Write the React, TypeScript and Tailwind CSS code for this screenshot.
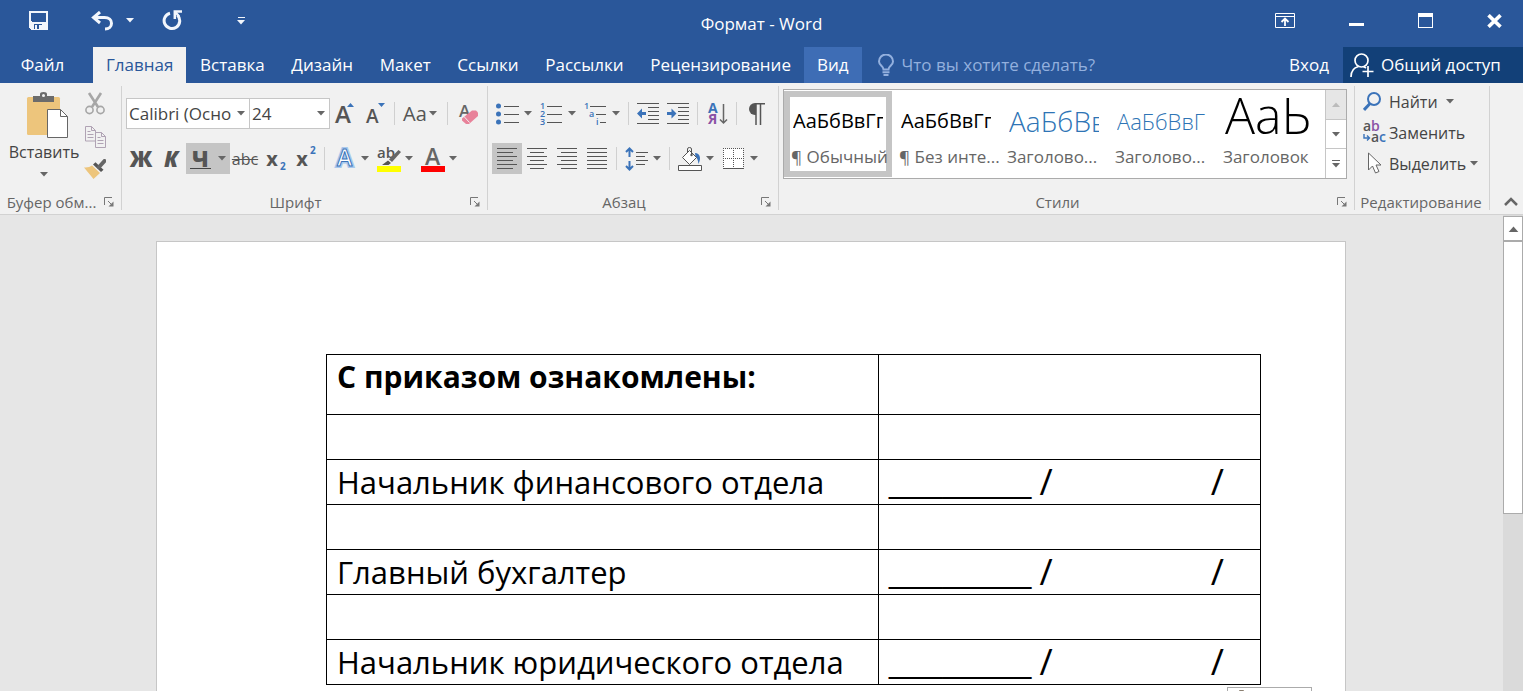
import type { ReactNode } from "react";

const tabs = [
  "Главная",
  "Вставка",
  "Дизайн",
  "Макет",
  "Ссылки",
  "Рассылки",
  "Рецензирование",
];

const styleItems = [
  { name: "¶ Обычный", sample: "АаБбВвГг,", look: "text-xl text-black", selected: true },
  { name: "¶ Без инте...", sample: "АаБбВвГг,", look: "text-xl text-black" },
  { name: "Заголово...", sample: "АаБбВв", look: "text-[28px] font-light text-[#2e74b5]" },
  { name: "Заголово...", sample: "АаБбВвГ", look: "text-[22px] font-light text-[#2e74b5]" },
  { name: "Заголовок", sample: "АаЬ", look: "pb-3 text-[50px] font-light text-black" },
];

const rows = [
  { title: "С приказом ознакомлены:", bold: true },
  {},
  { title: "Начальник финансового отдела", sign: true },
  {},
  { title: "Главный бухгалтер", sign: true },
  {},
  { title: "Начальник юридического отдела", sign: true },
];

const Arrow = ({ className = "text-[#666]" }: { className?: string }) => (
  <svg width="8" height="5" viewBox="0 0 8 5" className={`shrink-0 ${className}`}>
    <path d="M0 0h8L4 4.5z" fill="currentColor" />
  </svg>
);

const Separator = () => (
  <div className="flex w-[9px] shrink-0 justify-center">
    <div className="my-1 w-px bg-[#d0d0d0]" />
  </div>
);

type ToolProps = {
  label: string;
  children: ReactNode;
  menu?: boolean;
  active?: boolean;
};

function Tool({ label, children, menu, active }: ToolProps) {
  return (
    <button
      aria-label={label}
      className={`flex h-[31px] shrink-0 items-center hover:bg-[#d5d5d5] ${
        menu ? "w-11 justify-between pr-1 pl-1" : "w-[30px] justify-center"
      } ${active ? "bg-[#c5c5c5]" : ""}`}
    >
      {children}
      {menu && <Arrow />}
    </button>
  );
}

type LinesProps = { lines: [number, number][] };

// Horizontal strokes of an alignment icon, one [start, end] pair each
const Lines = ({ lines }: LinesProps) => (
  <svg width="22" height="22" viewBox="0 0 22 22" stroke="#555" shapeRendering="crispEdges">
    {lines.map(([a, b], i) => (
      <path key={i} d={`M${a} ${i * 4 + 0.5}H${b}`} />
    ))}
  </svg>
);

type GroupProps = {
  title: string;
  children: ReactNode;
  className: string;
  launcher?: boolean;
};

function Group({ title, children, className, launcher = true }: GroupProps) {
  return (
    <section className={`mt-[3px] mb-1 flex flex-col border-r border-[#d2d2d2] ${className}`}>
      <div className="flex-1">{children}</div>
      <div className="flex h-4 items-center pr-1 pl-0.5 text-[#666]">
        <p className="flex-1 text-center text-[15px] leading-4 whitespace-nowrap">{title}</p>
        {launcher && (
          <button aria-label={`Параметры: ${title}`} className="flex size-4 shrink-0 items-center justify-center">
            <svg width="10" height="10" viewBox="0 0 10 10" fill="none" stroke="#777">
              <path d="M.5 8V.5H8M4 4l4 4" />
              <path d="M9.500 4.500v5h-5z" fill="#777" stroke="none" />
            </svg>
          </button>
        )}
      </div>
    </section>
  );
}

function TitleBar() {
  return (
    <header className="grid h-[47px] grid-cols-[1fr_auto_1fr] items-center">
      <div className="flex items-center pb-1.5 pl-[29px]">
        <button aria-label="Сохранить">
          <svg width="19" height="19" viewBox="0 0 19 19" shapeRendering="crispEdges">
            <path d="M0 0h19v19H2l-2-2z" fill="#f2f6fc" />
            <path d="M2 2h15v8l-1 1H3l-1-1zM5 13h8v5H5z" fill="#2a579a" />
            <path d="M6 14h2v4H6zM10 14h3v4h-3z" fill="#f2f6fc" />
          </svg>
        </button>
        <button aria-label="Отменить" className="ml-[43px]">
          <svg width="23" height="20" viewBox="0 0 23 20" fill="none" stroke="#f2f6fc" strokeWidth="3">
            <path d="M9 1 2.500 6.500 9 12" />
            <path d="M2.500 6.500h11c4.500 0 7 2.500 7 5.700 0 3.300-2.500 5.800-6.500 5.800" />
          </svg>
        </button>
        <button aria-label="Варианты отмены" className="ml-3">
          <Arrow className="text-[#f2f6fc]" />
        </button>
        <button aria-label="Повторить" className="ml-7">
          <svg width="21" height="21" viewBox="0 0 21 21" fill="none" stroke="#f2f6fc" strokeWidth="3">
            <path d="M8 3.200A7.800 7.800 0 1 0 15.500 5.300" />
            <path d="M20 1.400h-7.200V9" strokeWidth="2.500" />
            <path d="M13 1.500l4 5" strokeWidth="2.500" />
          </svg>
        </button>
        <button aria-label="Настройка панели" className="ml-[54px] flex flex-col items-center gap-0.5">
          <span className="h-px w-[7px] bg-[#f2f6fc]" />
          <Arrow className="text-[#f2f6fc]" />
        </button>
      </div>
      <h1 className="text-[17px]">Формат - Word</h1>
      <div className="flex items-center justify-end gap-[54px] pr-[21px] pb-1.5">
        <button aria-label="Параметры отображения ленты">
          <svg width="20" height="15" viewBox="0 0 20 15" fill="none" stroke="#fff">
            <path d="M.5.500h19v14H.5zM.5 3.500h19" />
            <path d="M10 13V6M6.500 9 10 5.500 13.500 9" strokeWidth="1.800" />
          </svg>
        </button>
        <button aria-label="Свернуть" className="h-[11px] w-[15px] border-b-3 border-white" />
        <button aria-label="Развернуть" className="h-[15px] w-[15px] border border-t-4 border-white" />
        <button aria-label="Закрыть">
          <svg width="15" height="14" viewBox="0 0 15 14" stroke="#fff" strokeWidth="3.600">
            <path d="M1.500 1.200l12 11.600M13.500 1.200l-12 11.600" />
          </svg>
        </button>
      </div>
    </header>
  );
}

function TabBar() {
  return (
    <nav className="flex h-9 items-stretch">
      <button className="mr-2 w-[85px]">Файл</button>
      <div className="flex w-[711px] justify-between">
        {tabs.map((tab, i) => (
          <button
            key={tab}
            className={`px-[13px] ${i === 0 ? "bg-[#f1f1f1] text-[#2a579a]" : "hover:bg-[#3e6db5]"}`}
          >
            {tab}
          </button>
        ))}
      </div>
      <button className="bg-[#3e6db5] px-[13px]">Вид</button>
      <label className="ml-4 flex flex-1 items-center gap-2 text-[#93b0de]">
        <svg width="16" height="22" viewBox="0 0 16 22" fill="none" stroke="currentColor" strokeWidth="2">
          <path d="M5.500 15.500C5.500 12 1 11.500 1 7.500a7 7 0 0 1 14 0c0 4-4.500 4.500-4.500 8z" />
          <path d="M4.500 18.200h7M5.500 21h5" />
        </svg>
        <input
          aria-label="Помощник"
          placeholder="Что вы хотите сделать?"
          className="w-56 bg-transparent outline-none placeholder:text-[#93b0de]"
        />
      </label>
      <button className="px-3.5">Вход</button>
      <button className="flex w-[180px] items-center gap-[7px] bg-[#124078] pl-[7px]">
        <svg width="24" height="25" viewBox="0 0 24 25" fill="none" stroke="#fff" strokeWidth="1.700">
          <circle cx="11.500" cy="7.500" r="6.500" />
          <path d="M1 24c0-6 3-9.500 7.500-10.500M13.500 13.800c1 .2 1.800.7 2.500 1.200M18 13v11M12.500 18.500h11" />
        </svg>
        Общий доступ
      </button>
    </nav>
  );
}

function Clipboard() {
  return (
    <Group title="Буфер обм..." className="w-[122px]">
      <div className="flex gap-1 pt-1.5 pl-2">
        <button className="flex w-[72px] flex-col items-center text-base text-[#444]">
          <svg width="50" height="46" viewBox="-8 0 50 46">
            <rect x="0" y="5" width="33" height="38" rx="1.500" fill="#edc57c" />
            <path d="M6 4h7V2q0-2 3.500-2T20 2v2h7v6H6z" fill="#6b6b6b" />
            <circle cx="16.500" cy="3.500" r="1.500" fill="#f1f1f1" />
            <path d="M20.500 17.500h13l7 7v21h-20z" fill="#fff" stroke="#666" />
            <path d="M33.500 17.500v7h7" fill="none" stroke="#666" />
          </svg>
          <span className="mt-0.5">Вставить</span>
          <span className="flex h-5 items-center">
            <Arrow />
          </span>
        </button>
        <div className="flex flex-col items-center gap-[11px]">
          <button aria-label="Вырезать">
            <svg width="20" height="23" viewBox="0 0 20 23" fill="none" stroke="#a6a6a6">
              <path d="M4 1l9 14M16 1L7 15" strokeWidth="2.600" />
              <circle cx="4.500" cy="18" r="3.600" strokeWidth="1.600" />
              <circle cx="15.500" cy="18" r="3.600" strokeWidth="1.600" />
            </svg>
          </button>
          <button aria-label="Копировать">
            <svg width="21" height="22" viewBox="0 0 21 22" fill="#f1f1f1" stroke="#b0a3b4">
              <path d="M.5.500h6l4 4v10.500H.5zM6.500.5v4h4M2.500 5.500h3M2.500 8.500h6M2.500 11.500h6" />
              <path d="M10.500 6.500h6l4 4v11h-10zM16.500 6.500v4h4M12.500 11.500h3M12.500 14.500h6M12.500 17.500h6" />
            </svg>
          </button>
          <button aria-label="Формат по образцу">
            <svg width="22" height="20" viewBox="0 0 22 20">
              <path d="M0 8.500q5 .5 8-2l8 7.500L9.500 20z" fill="#edc57c" />
              <path d="M9 5.500l2.500-2.300 8 7.500-2.500 2.300z" fill="#555" />
              <path d="M15 8l5.500-6" stroke="#666" strokeWidth="4" strokeLinecap="round" />
            </svg>
          </button>
        </div>
      </div>
    </Group>
  );
}

type PickerProps = { label: string; value: string; className: string };

function Picker({ label, value, className }: PickerProps) {
  return (
    <div className={`relative h-[31px] border border-[#c6c6c6] bg-white ${className}`}>
      <select aria-label={label} className="size-full appearance-none pl-0.5 text-[17px] text-[#444] outline-none">
        <option>{value}</option>
      </select>
      <Arrow className="pointer-events-none absolute top-3 right-1 text-[#666]" />
    </div>
  );
}

function FontGroup() {
  return (
    <Group title="Шрифт" className="w-[366px]">
      <div className="flex flex-col gap-3.5 pt-3 pl-1 text-[#555]">
        <div className="flex">
          <Picker label="Шрифт" value="Calibri (Осно" className="w-[124px]" />
          <Picker label="Размер" value="24" className="-ml-px w-[81px]" />
          <Tool label="Увеличить размер">
            <svg width="22" height="24" viewBox="0 0 22 24" className="overflow-visible">
              <text x="1" y="21" fontSize="24" fontWeight="600" fill="#555">A</text>
              <path d="M13 5l3.500-4L20 5z" fill="#3b73b9" />
            </svg>
          </Tool>
          <Tool label="Уменьшить размер">
            <svg width="22" height="24" viewBox="0 0 22 24" className="overflow-visible">
              <text x="2" y="21" fontSize="19" fontWeight="600" fill="#555">A</text>
              <path d="M14 1l3.500 4L21 1z" fill="#3b73b9" />
            </svg>
          </Tool>
          <Separator />
          <button aria-label="Регистр" className="flex w-11 items-center gap-0.5 pl-1 text-xl">
            Aa
            <Arrow />
          </button>
          <Separator />
          <Tool label="Очистить форматирование">
            <svg width="22" height="24" viewBox="0 0 22 24" className="overflow-visible">
              <text x="3" y="15" fontSize="17" fontWeight="600" fill="#666">A</text>
              <path d="M16 8.500h4l2 2v3.500L13 22h-3l-4-3.500v-2z" fill="#e8829a" />
              <path d="M8 14.500l5.500 6" stroke="#f1f1f1" />
            </svg>
          </Tool>
        </div>
        <div className="flex">
          <Tool label="Полужирный">
            <span className="text-[22px] font-extrabold">Ж</span>
          </Tool>
          <Tool label="Курсив">
            <span className="text-[22px] font-extrabold italic">К</span>
          </Tool>
          <Tool label="Подчеркнутый" menu active>
            <span className="border-b border-[#444] px-0.5 text-[22px] leading-5 font-extrabold">Ч</span>
          </Tool>
          <Tool label="Зачеркнутый">
            <span className="text-base line-through">abc</span>
          </Tool>
          <Tool label="Подстрочный знак">
            <span className="ml-0.5 text-xl font-bold">x</span>
            <span className="mt-4 ml-0.5 text-[10px] font-bold text-[#3b73b9]">2</span>
          </Tool>
          <Tool label="Надстрочный знак">
            <span className="ml-0.5 text-xl font-bold">x</span>
            <span className="mb-4 ml-0.5 text-[10px] font-bold text-[#3b73b9]">2</span>
          </Tool>
          <Separator />
          <Tool label="Текстовые эффекты" menu>
            <svg width="24" height="26" viewBox="0 0 24 26" className="overflow-visible">
              <text x="4" y="20" fontSize="23" fontWeight="600" fill="none" stroke="#a9c8ec" strokeWidth="4">A</text>
              <text x="4" y="20" fontSize="23" fontWeight="600" fill="#fff" stroke="#3b73b9">A</text>
            </svg>
          </Tool>
          <Tool label="Цвет выделения текста" menu>
            <svg width="24" height="28" viewBox="0 0 24 28" className="overflow-visible">
              <text x="0" y="13" fontSize="15" fontWeight="600" fill="#555">ab</text>
              <path d="M21.500 5L24 7l-9 10-3-2.500z" fill="#666" />
              <path d="M11 15.500l3 2.500-2.500 2H5z" fill="#555" />
              <path d="M0 21h24v6H0z" fill="#ff0" />
            </svg>
          </Tool>
          <Tool label="Цвет текста" menu>
            <svg width="24" height="28" viewBox="0 0 24 28" className="overflow-visible">
              <text x="4" y="20" fontSize="23" fontWeight="600" fill="#666">A</text>
              <path d="M0 21h24v6H0z" fill="#f00" />
            </svg>
          </Tool>
        </div>
      </div>
    </Group>
  );
}

function ParagraphGroup() {
  return (
    <Group title="Абзац" className="w-[291px]">
      <div className="flex flex-col gap-3.5 pt-3 pl-1">
        <div className="flex">
          <Tool label="Маркеры" menu>
            <svg width="23" height="22" viewBox="0 0 23 22" stroke="#555">
              <path d="M8 3.500h15M8 11.500h15M8 19.500h15" />
              <g fill="#3b73b9" stroke="none">
                <circle cx="2.500" cy="3" r="2.500" />
                <circle cx="2.500" cy="11" r="2.500" />
                <circle cx="2.500" cy="19" r="2.500" />
              </g>
            </svg>
          </Tool>
          <Tool label="Нумерация" menu>
            <svg width="23" height="24" viewBox="0 0 23 24" stroke="#555" className="overflow-visible">
              <path d="M7 4.500h15M7 12.500h15M7 20.500h15" />
              <g fill="#3b73b9" stroke="none" fontSize="9" fontWeight="600">
                <text x="0" y="7">1</text>
                <text x="0" y="15">2</text>
                <text x="0" y="23">3</text>
              </g>
            </svg>
          </Tool>
          <Tool label="Многоуровневый список" menu>
            <svg width="23" height="24" viewBox="0 0 23 24" stroke="#555" className="overflow-visible">
              <path d="M6 4.500h16M12 12.500h10M16 20.500h6" />
              <g fill="#3b73b9" stroke="none" fontSize="9" fontWeight="600">
                <text x="0" y="7">1</text>
                <text x="5" y="15">a</text>
                <text x="12" y="23">i</text>
              </g>
            </svg>
          </Tool>
          <Separator />
          <Tool label="Уменьшить отступ">
            <svg width="22" height="21" viewBox="0 0 22 21" stroke="#555">
              <path d="M0 .5h22M11 4.500h11M11 8.500h11M11 12.500h11M11 16.500h11M0 20.500h22" />
              <path d="M0 10.500l5-5v3.500h4v3H5v3.500z" fill="#3b73b9" stroke="none" />
            </svg>
          </Tool>
          <Tool label="Увеличить отступ">
            <svg width="22" height="21" viewBox="0 0 22 21" stroke="#555">
              <path d="M0 .5h22M11 4.500h11M11 8.500h11M11 12.500h11M11 16.500h11M0 20.500h22" />
              <path d="M9.500 10.500l-5-5v3.500H0v3h4.500v3.500z" fill="#3b73b9" stroke="none" />
            </svg>
          </Tool>
          <Separator />
          <Tool label="Сортировка">
            <svg width="20" height="24" viewBox="0 0 20 24" fontWeight="700" fontSize="14" className="overflow-visible">
              <text x="1" y="11" fill="#3b73b9">А</text>
              <text x="1" y="22" fill="#8a52a5">Я</text>
              <path d="M16.500 2v19M13 17.500l3.500 3.500 3.500-3.500" fill="none" stroke="#666" strokeWidth="1.500" />
            </svg>
          </Tool>
          <Separator />
          <Tool label="Отобразить все знаки">
            <svg width="17" height="22" viewBox="0 0 17 22" stroke="#555" strokeWidth="1.500">
              <path d="M7 .8h10M8 1v21M12.500 1v21" />
              <path d="M8 0v12H7A6 6 0 0 1 7 0z" fill="#555" stroke="none" />
            </svg>
          </Tool>
        </div>
        <div className="flex">
          <Tool label="По левому краю" active>
            <Lines lines={[[1, 21], [1, 17], [1, 21], [1, 17], [1, 21], [1, 17]]} />
          </Tool>
          <Tool label="По центру">
            <Lines lines={[[1, 21], [4, 18], [1, 21], [4, 18], [1, 21], [4, 18]]} />
          </Tool>
          <Tool label="По правому краю">
            <Lines lines={[[1, 21], [5, 21], [1, 21], [5, 21], [1, 21], [5, 21]]} />
          </Tool>
          <Tool label="По ширине">
            <Lines lines={[[1, 21], [1, 21], [1, 21], [1, 21], [1, 21], [1, 21]]} />
          </Tool>
          <Separator />
          <Tool label="Интервал" menu>
            <svg width="23" height="24" viewBox="0 0 23 24" fill="none" stroke="#555">
              <path d="M11 5.500h12M11 9.500h9M11 13.500h12M11 17.500h9" />
              <path d="M4.500 3v7M4.500 14v7M1 5l3.500-3.500L8 5M1 19l3.500 3.500L8 19" stroke="#3b73b9" strokeWidth="2" />
            </svg>
          </Tool>
          <Separator />
          <Tool label="Заливка" menu>
            <svg width="24" height="24" viewBox="0 0 24 24" stroke="#555">
              <path d="M17 6c5 .5 6.500 5 3.500 11-.5-4-1.500-6-3-7.500z" fill="#3b73b9" stroke="none" />
              <path d="M11.500 3.500l7 7-7 7-7-7z" fill="#fff" />
              <path d="M9.500 5.500V2q0-1.500 2-1.500t2 1.500v6" fill="none" />
              <circle cx="13.500" cy="8" r="1.200" fill="#555" stroke="none" />
              <path d="M.5 18.500h23v5H.5z" fill="#fff" />
            </svg>
          </Tool>
          <Tool label="Границы" menu>
            <svg width="23" height="22" viewBox="0 0 23 22" fill="#fff" stroke="#555">
              <path d="M1 .5h20v20H1z" stroke="none" />
              <path d="M1 .5h21M1 10.500h21M1.500 0v21M11.500 0v21M21.500 0v21" strokeDasharray="1 1" shapeRendering="crispEdges" />
              <path d="M1 20.500h21" />
            </svg>
          </Tool>
        </div>
      </div>
    </Group>
  );
}

function StylesGroup() {
  return (
    <Group title="Стили" className="min-w-0 flex-1">
      <div className="mt-[3px] mr-[7px] ml-1 flex h-[90px] border border-[#ababab] bg-white">
        <div className="flex min-w-0 flex-1">
          {styleItems.map((item, i) => (
            <button
              key={i}
              className={`my-px flex w-[108px] shrink-0 flex-col border-6 px-[3px] text-left whitespace-nowrap ${
                item.selected ? "border-[#c5c5c5]" : "border-transparent"
              }`}
            >
              <span className={`flex h-12 w-full items-center overflow-hidden ${item.look}`}>
                {item.sample}
              </span>
              <span className="-ml-0.5 text-[17px] leading-6 text-[#666]">{item.name}</span>
            </button>
          ))}
        </div>
        <div className="flex w-[21px] flex-col divide-y divide-[#c6c6c6] border-l border-[#c6c6c6]">
          <button aria-label="Вверх" className="flex flex-1 items-center justify-center bg-[#e6e6e6]">
            <Arrow className="rotate-180 text-[#bbb]" />
          </button>
          <button aria-label="Вниз" className="flex flex-1 items-center justify-center">
            <Arrow />
          </button>
          <button aria-label="Все стили" className="flex flex-1 flex-col items-center justify-center gap-0.5">
            <span className="h-px w-2 bg-[#666]" />
            <Arrow />
          </button>
        </div>
      </div>
    </Group>
  );
}

function EditingGroup() {
  return (
    <Group title="Редактирование" className="w-[135px]" launcher={false}>
      <div className="flex flex-col pl-2 text-base text-[#444]">
        <button className="flex h-[31px] items-center gap-2">
          <svg width="18" height="20" viewBox="0 0 18 20" fill="none" stroke="#3b73b9">
            <circle cx="11" cy="7" r="6" strokeWidth="2" />
            <path d="M7 11.500L1 18" strokeWidth="3" />
          </svg>
          Найти
          <Arrow />
        </button>
        <button className="flex h-[31px] items-center gap-1">
          <svg width="22" height="24" viewBox="0 0 22 24" fontSize="14" fontWeight="600" className="overflow-visible">
            <text x="0" y="10" fill="#555">a</text>
            <text x="8" y="10" fill="#8a52a5">b</text>
            <text x="8" y="21" fill="#555">a</text>
            <text x="16" y="21" fill="#3b73b9">c</text>
            <path d="M1 13v4h5M4 14.500L6.500 17 4 19.500" fill="none" stroke="#3b73b9" strokeWidth="1.400" />
          </svg>
          Заменить
        </button>
        <button className="flex h-[31px] items-center gap-1">
          <svg width="22" height="23" viewBox="0 0 22 23" fill="#fff" stroke="#666">
            <path d="M5.500 1v17l4-4 3 7 3.500-1.500-3-6.500h5z" />
          </svg>
          Выделить
          <Arrow />
        </button>
      </div>
    </Group>
  );
}

function Sheet() {
  return (
    <main className="relative mt-[26px] mr-[157px] ml-auto w-[1190px] border border-[#c6c6c6] bg-white pt-28 pb-20 pl-[169px] text-black">
      <table className="w-[935px] table-fixed border-collapse text-[31px] leading-11">
        <tbody>
          {rows.map((row, i) => (
            <tr key={i} className={i === 0 ? "h-15" : "h-[45px]"}>
              <td
                className={`w-[552px] border border-black px-2.5 py-0 align-top ${
                  row.bold ? "text-[30px] font-bold" : ""
                }`}
              >
                {row.title}
              </td>
              <td className="border border-black px-2.5 py-0 align-top">
                {row.sign && (
                  <div className="flex">
                    <span className="font-['Liberation_Sans',sans-serif] text-[32px] leading-11">________</span>
                    <span className="ml-2 text-4xl leading-11">/</span>
                    <span className="ml-auto pr-[26px] text-4xl leading-11">/</span>
                  </div>
                )}
              </td>
            </tr>
          ))}
        </tbody>
      </table>
      {/* paste options popup at the table corner */}
      <div className="absolute right-[33px] bottom-12 h-[30px] w-[85px] border border-[#ababab] bg-white pt-0.5 pl-2.5">
        <svg width="12" height="14" viewBox="0 0 12 14" fill="#eee" stroke="#8a7f70">
          <path d="M1.500 3.500V.5h4v3M.5 3.500h8v9h-8z" />
        </svg>
      </div>
    </main>
  );
}

export default function App() {
  return (
    <div className="flex h-screen flex-col overflow-hidden bg-[#e6e6e6] font-['Open_Sans','Noto_Sans',sans-serif] text-[17px]">
      <div className="bg-[#2a579a] text-white">
        <TitleBar />
        <TabBar />
      </div>
      <div className="flex h-[132px] shrink-0 border-b border-[#d2d2d2] bg-[#f1f1f1]">
        <Clipboard />
        <FontGroup />
        <ParagraphGroup />
        <StylesGroup />
        <EditingGroup />
        <button aria-label="Свернуть ленту" className="flex w-[33px] items-end justify-center pb-2 pl-2">
          <svg width="14" height="9" viewBox="0 0 14 9" fill="none" stroke="#666" strokeWidth="2.500">
            <path d="M1 8l6-6 6 6" />
          </svg>
        </button>
      </div>
      <div className="flex min-h-0 flex-1">
        <div className="min-w-0 flex-1 overflow-hidden">
          <Sheet />
        </div>
        <div className="flex w-5 flex-col bg-[#dadada] pt-px">
          <button aria-label="Прокрутить вверх" className="flex h-[25px] items-center justify-center border border-[#ababab] bg-white">
            <Arrow className="h-1.5 w-[11px] rotate-180 text-[#666]" />
          </button>
          <div className="h-[273px] border border-[#ababab] bg-white" />
        </div>
      </div>
    </div>
  );
}
